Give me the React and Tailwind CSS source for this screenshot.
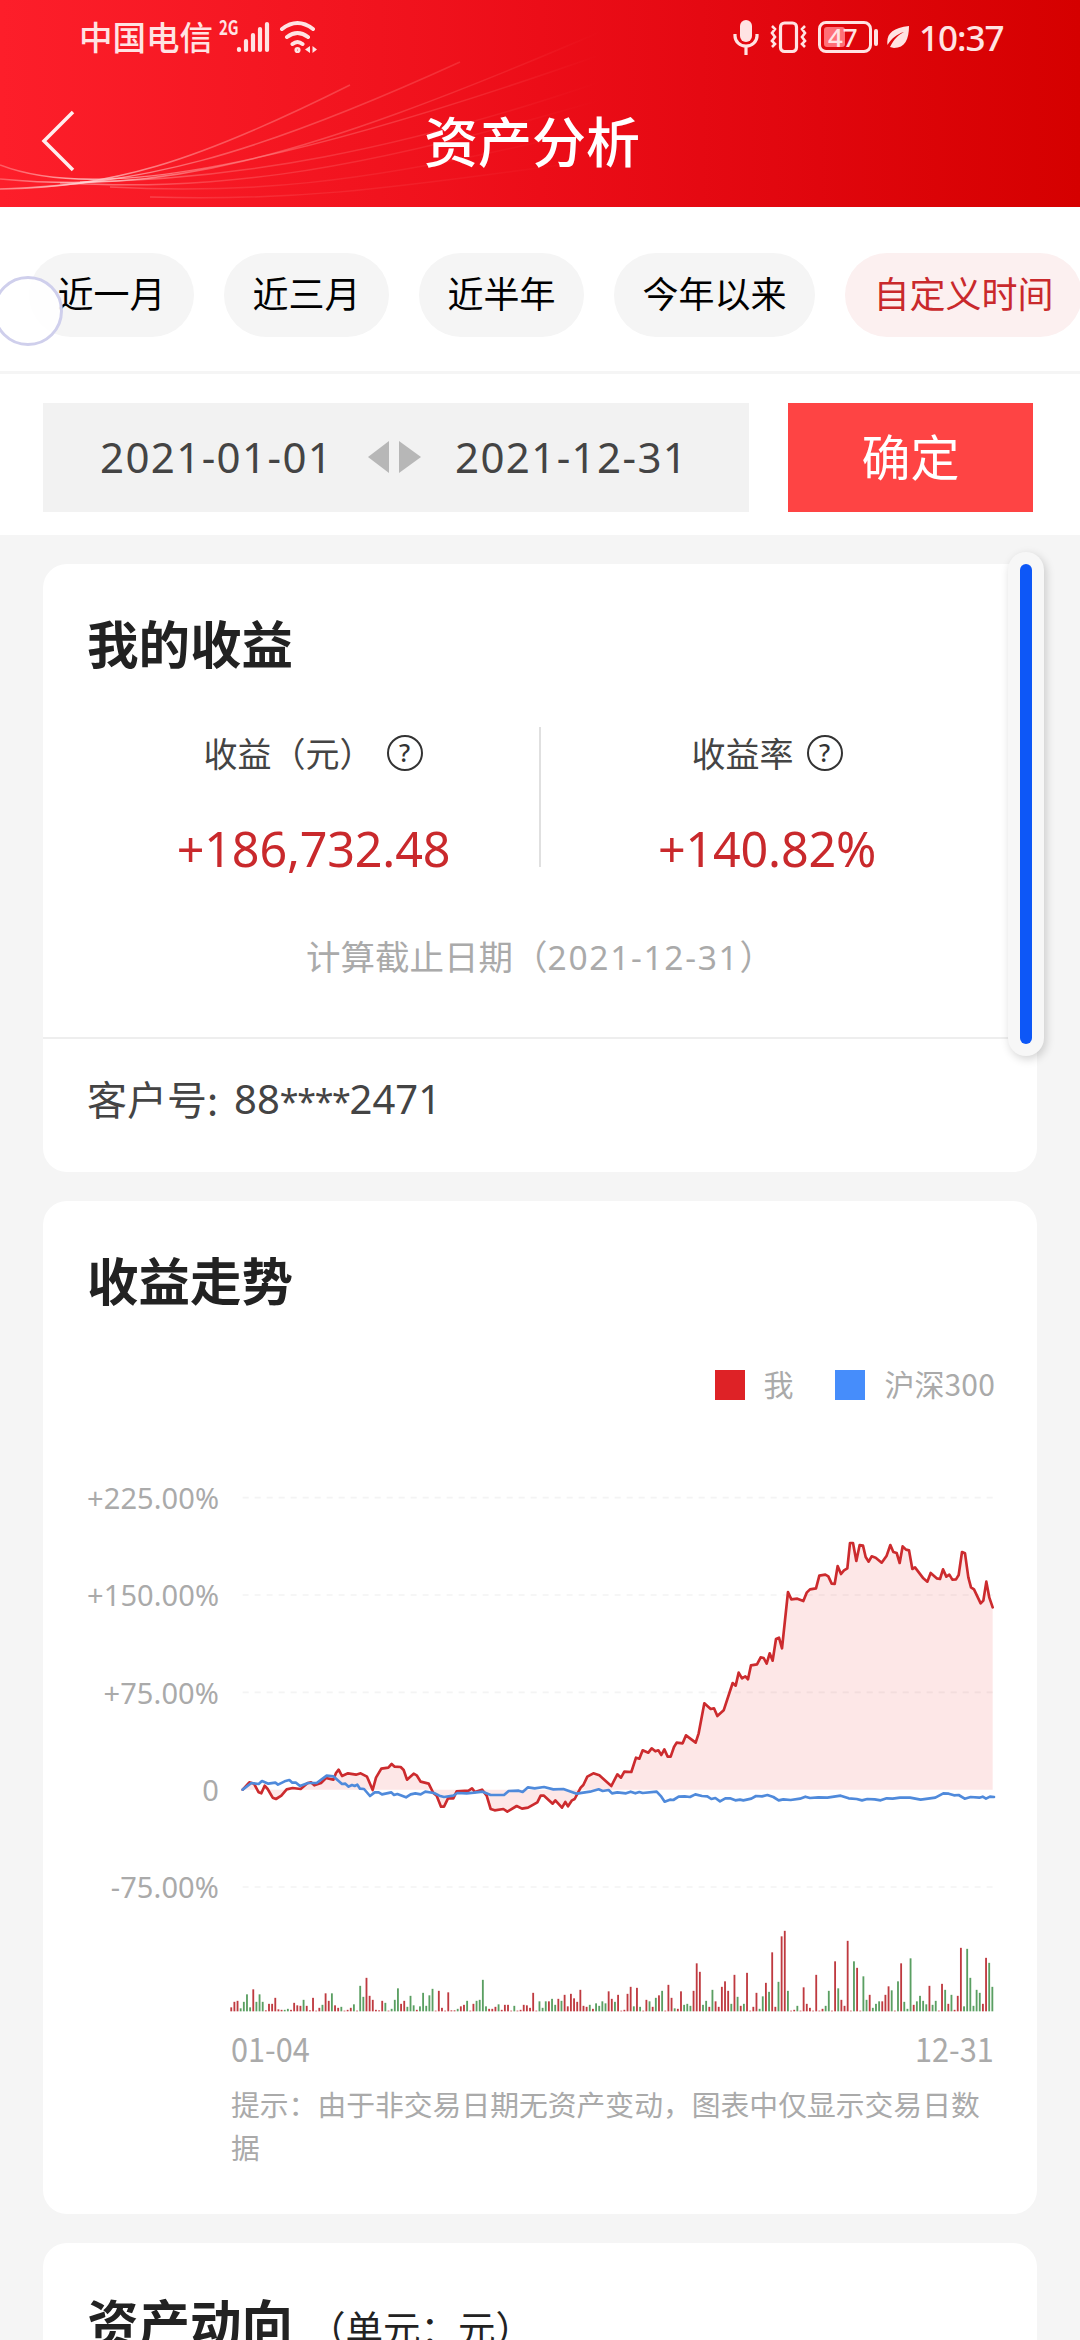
import { useState } from "react";

const periods = ["近一月", "近三月", "近半年", "今年以来", "自定义时间"];

const yLabels = ["+225.00%", "+150.00%", "+75.00%", "0", "-75.00%"];
const gridRows = [-4, 288, 580, 1164];

// cumulative return of the account
const mine =
  "68,872 88,850 102,854 116,880 124,883 134,860 143,870 158,896 168,900 184,890 200,871 218,867 242,870 262,853 273,850 283,859 303,852 318,837 340,842 348,822 356,812 366,831 384,823 408,827 422,823 441,833 458,873 468,836 484,809 505,806 515,795 524,803 542,804 551,813 561,842 581,824 590,829 602,848 626,854 640,882 650,890 663,923 672,923 684,898 700,898 710,877 746,875 756,868 765,879 786,872 800,890 812,930 824,934 850,930 862,938 890,921 906,929 924,926 952,910 962,890 972,890 998,914 1006,904 1026,926 1036,909 1044,922 1056,904 1064,900 1082,866 1090,858 1102,833 1120,823 1138,829 1174,861 1192,826 1203,836 1213,818 1234,819 1248,776 1258,779 1268,754 1285,761 1295,748 1306,757 1315,754 1324,768 1333,751 1343,773 1352,773 1362,744 1370,731 1388,733 1398,709 1427,731 1436,703 1453,613 1472,630 1482,628 1492,651 1511,634 1538,552 1547,560 1556,521 1566,538 1576,532 1584,541 1593,499 1611,496 1622,475 1631,477 1640,494 1649,463 1658,485 1668,420 1677,416 1686,448 1704,279 1714,301 1732,299 1750,306 1760,281 1770,271 1788,268 1798,230 1816,227 1825,232 1835,254 1844,255 1853,201 1863,225 1872,214 1882,208 1890,132 1899,132 1909,186 1919,138 1929,140 1937,174 1946,188 1955,172 1967,176 1985,191 2000,170 2011,138 2020,159 2030,162 2039,192 2048,142 2058,152 2067,154 2077,210 2085,205 2110,238 2122,248 2132,222 2150,238 2160,240 2169,211 2179,233 2188,227 2197,242 2208,241 2216,228 2226,159 2235,163 2245,235 2253,265 2262,271 2282,313 2290,305 2299,248 2308,296 2318,325";

// CSI 300 index
const index300 =
  "68,872 94,852 116,855 126,846 145,854 166,851 174,857 194,847 208,843 217,851 228,851 240,861 264,852 290,852 320,830 340,832 366,855 376,854 386,863 396,858 404,861 412,857 420,869 432,870 450,891 464,880 476,880 486,886 514,880 522,888 532,885 558,895 572,886 586,883 602,886 616,878 642,882 658,890 672,894 700,890 712,882 740,883 762,881 788,878 812,888 852,888 866,876 896,875 908,879 924,865 944,868 972,864 1000,871 1030,870 1070,884 1110,878 1136,871 1148,876 1166,873 1176,883 1192,880 1218,883 1232,878 1246,883 1258,879 1268,882 1310,878 1324,893 1334,908 1350,902 1360,903 1376,893 1394,892 1410,894 1426,886 1446,891 1462,892 1474,900 1486,897 1500,907 1516,898 1530,898 1546,904 1560,902 1570,904 1594,899 1608,891 1626,892 1642,888 1660,894 1676,904 1690,901 1712,903 1740,899 1756,893 1770,897 1795,895 1822,896 1862,890 1886,898 1910,900 1926,904 1942,900 1964,901 1982,904 2000,898 2018,899 2040,896 2070,896 2102,902 2124,899 2146,896 2170,883 2186,884 2202,889 2216,888 2234,899 2252,894 2278,896 2288,893 2298,899 2310,893 2322,894";

// daily change per trading day: positive is drawn red, negative green
const daily = [
  4, 9.5, 10.5, -3, -9.5, -17, -4, 22, -9.5, -17, -9.5, 1, 7.5, 7.5, 13.5, 2, 1.5, -1.5, -2.5, 1.5,
  8.5, 6, 5.5, -11.5, 5.5, 1, 13.5, 0.7, 3.5, -6.5, 18, 10.5, -18, 6, 3.5, -4.5, 0.7, 1.5, 3.5, -7,
  0.7, -25.5, -14.5, 33.5, 15.5, 11.5, 1.5, 1, 10.5, -8.5, 0.7, -2.5, -11.5, -23, 7.5, 10.5, -4.5, -15.5, -6, 1.5,
  -5, -18.5, -5.5, -16, -22.5, 0.7, 20.5, 3.5, 0.7, 19, 1, 1, -2.5, 5, 6.5, -10.5, 0.7, 7.5, -10.5, -11.5,
  -31.5, -5, 2.5, 2.5, 4.5, -7, 1.5, 6.5, 6.5, 0.7, -5.5, 0.7, 1.5, 6.5, 6, 3.5, 18.5, 0.7, -10, -3.5,
  -10, 10, -12.5, -6.5, 12.5, -10.5, 16.5, 5, 17.5, 13, 9.5, 21.5, 5.5, 4.5, -6.5, 2.5, -8, -5.5, -10, -8,
  20, 12.5, -9.5, 16.5, 0.7, 1.5, 17.5, 24.5, -5, 23.5, -4.5, 0.7, 11.5, -10, 4.5, -13.5, 16, -20.5, 0.7, 26.5,
  13.5, -3, 2.5, 20, -6.5, -7.5, -5.5, 20.5, 48, 39.5, -6.5, -10.5, 4.5, -21.5, 10, 4.5, 24.5, 30, 20.5, -7.5,
  36.5, -14.5, 5.5, -7.5, 38.5, 0.7, 4.5, 18.5, -2.5, -15, 28.5, -19.5, 59, 4.5, -29.5, 75, 80.5, -20.5, 0.7, 1.5,
  -5.5, 0.7, 24, 7.5, 3.5, 0.7, 36.5, 0.7, 2.5, -5.5, -20.5, 0.7, 50, -23, 11.5, 5.5, 70.5, 0.7, -50, 43.5,
  0.7, -35, -11.5, 16.5, -3.5, -7.5, -10, 10, 16.5, 25, -21, 0.7, -30, 48, -9.5, -2.5, -53, 6.5, -10, -15.5,
  -10.5, -7, 25.5, -6.5, -10.5, 0.7, 27.5, -21.5, 7.5, -16.5, 1.5, 15.5, 63.5, -5, -62.5, -33.5, -5.5, -21.5, -18.5, 7.5,
  53.5, -48.5, -24.5,
];

function Swoosh() {
  return (
    <svg className="absolute inset-0" width="1080" height="207" fill="none" aria-hidden="true">
      <defs>
        <linearGradient id="fade" gradientUnits="userSpaceOnUse" x1="0" y1="0" x2="600" y2="0">
          <stop offset="0" stopColor="#ffb0b0" stopOpacity="0.4" />
          <stop offset="0.14" stopColor="#ffd5d5" stopOpacity="0.8" />
          <stop offset="0.35" stopColor="#ff9a9a" stopOpacity="0.5" />
          <stop offset="0.75" stopColor="#ff7070" stopOpacity="0.3" />
          <stop offset="1" stopColor="#ff6060" stopOpacity="0" />
        </linearGradient>
      </defs>
      <g stroke="url(#fade)" strokeWidth="1.5">
        <path d="M0 189C110 187 190 165 350 85" />
        <path d="M0 189C140 184 245 160 460 62" />
        <path d="M0 179C160 194 290 165 600 32" />
        <path d="M0 165C80 196 230 185 600 55" />
        <path d="M80 182C240 180 400 150 600 82" opacity="0.7" />
        <path d="M60 183C200 190 330 180 600 100" opacity="0.6" />
        <path d="M110 187C240 194 360 185 560 137" opacity="0.4" />
        <path d="M150 197C290 201 380 190 560 165" opacity="0.4" />
      </g>
    </svg>
  );
}

function StatusBar() {
  return (
    <div className="relative flex h-[74px] items-center pl-[79px] text-[#ffe3e3]">
      <span className="pb-[2px] text-[33.500px] leading-none font-medium">中国电信</span>
      <span className="ml-[6px] mb-[20px] w-[18px] origin-left scale-x-[0.75] text-[20px] leading-none font-bold">2G</span>
      <svg className="-ml-px" width="34" height="34" viewBox="0 0 34 34" stroke="currentColor" strokeWidth="4.2" strokeLinecap="round">
        <path d="M3 30v-1M10 30v-9M17 30V15M24 30V9M31 30V4" />
      </svg>
      <svg className="ml-[9px]" width="40" height="34" viewBox="0 0 40 34" fill="none" stroke="currentColor" strokeWidth="4" strokeLinecap="round">
        <path d="M3 9Q18.500-3 34 9M8 17Q18.500 9 29 17M13.500 24Q18.500 20 23.500 24" />
        <circle cx="18.500" cy="30" r="1.300" strokeWidth="3.600" />
        <path d="M31 26v7l-5-3.500zM33.500 26v7l4.500-3.500z" fill="currentColor" stroke="none" />
      </svg>

      <div className="ml-auto flex items-center pr-[74px]">
        <svg width="26" height="36" viewBox="0 0 26 36" fill="none" stroke="currentColor" strokeWidth="3.2">
          <rect x="7" y="1" width="12" height="22" rx="6" fill="currentColor" stroke="none" />
          <path d="M2 15v2a11 10 0 0 0 22 0v-2M13 27v9" />
        </svg>
        <svg className="ml-[10px]" width="40" height="34" viewBox="0 0 40 34" fill="none" stroke="currentColor" strokeWidth="3.2">
          <rect x="11.500" y="3" width="16" height="28.500" rx="4" />
          <path d="M3 6l3 3-3 4 3 4-3 4 3 3-3 3M36 6l-3 3 3 4-3 4 3 4-3 3 3 3" strokeWidth="2.600" />
        </svg>
        <div className="ml-[9px] flex h-[32px] w-[54px] rounded-[8px] border-[3px] border-current p-[3px]">
          <div className="relative h-full w-[21px] rounded-[3px] bg-[#ff7078]">
            <span className="absolute -top-px left-[4px] font-['Noto_Sans'] text-[26px] leading-[22px] font-medium">47</span>
          </div>
        </div>
        <span className="ml-[2px] h-[17px] w-[4px] rounded-full bg-current" />
        <svg className="ml-[9px]" width="23" height="23" viewBox="0 0 23 23">
          <path d="M22 0C22 13 18 22 7 22L3 21C7 13 11 9 17 6C10 8 5 12 0.500 19C-1 8 5 2 22 0Z" fill="currentColor" />
        </svg>
        <span className="ml-[9px] w-[87px] font-['Noto_Sans'] text-[35px] leading-none font-medium tracking-[-1px] whitespace-nowrap">10:37</span>
      </div>
    </div>
  );
}

function Help() {
  return (
    <span className="flex size-[36px] items-center justify-center rounded-full border-2 border-[#333] font-['Noto_Sans'] text-[25px] leading-none font-medium text-[#333]">
      ?
    </span>
  );
}

function Chart() {
  return (
    <div className="flex">
      <div className="flex w-[132px] flex-col text-right font-['Noto_Sans'] text-[29px] leading-[97.300px] tracking-[0.1px] whitespace-nowrap text-[#aaa]">
        {yLabels.map((label) => (
          <span key={label} className="h-[97.300px]">
            {label}
          </span>
        ))}
      </div>
      {/* drawn at three units per pixel */}
      <svg className="ml-px" width="790" height="570" viewBox="0 -150 2370 1710" fill="none">
        {gridRows.map((y) => (
          <path key={y} d={`M68 ${y}H2320`} stroke="#f4f4f4" strokeWidth="5" strokeDasharray="18 18" />
        ))}
        <polygon points={`68,872 ${mine} 2318,872`} fill="#ea2028" fillOpacity="0.11" />
        <polyline points={mine} stroke="#cc2b2e" strokeWidth="8" strokeLinejoin="round" strokeLinecap="round" />
        <polyline points={index300} stroke="#4f8adb" strokeWidth="8" strokeLinejoin="round" strokeLinecap="round" />
        {daily.map((v, i) => (
          <rect
            key={i}
            x={31 + i * 9.435}
            y={1537 - Math.abs(v) * 3}
            width="5.5"
            height={Math.abs(v) * 3}
            fill={v > 0 ? "#bf3a40" : "#5a9f62"}
          />
        ))}
      </svg>
    </div>
  );
}

export default function App() {
  const [active, setActive] = useState("自定义时间");

  return (
    <div className="relative h-[2340px] w-[1080px] overflow-hidden bg-[#f5f5f5] font-['Noto_Sans_CJK_SC',sans-serif] text-[#444]">
      <header className="relative h-[207px] bg-linear-to-r from-[#fd1e2a] via-[#ec0d18] to-[#d50000]">
        <Swoosh />
        <StatusBar />
        <div className="relative flex h-[133px] items-center">
          <button type="button" className="ml-[40px]" aria-label="返回">
            <svg width="36" height="62" viewBox="0 0 36 62" fill="none" stroke="#ffeded" strokeWidth="3.5">
              <path d="M33 2L4 31l29 29" />
            </svg>
          </button>
          <h1 className="ml-[348px] pb-[2px] text-[54px] leading-none font-medium text-white">资产分析</h1>
        </div>
      </header>

      <nav className="flex h-[167px] items-center gap-[30px] border-b-[3px] border-[#f5f5f5] bg-white pt-[11px] pl-[29px]">
        {periods.map((name) => (
          <button
            key={name}
            type="button"
            onClick={() => setActive(name)}
            className={`h-[84px] shrink-0 rounded-full px-[28.500px] pb-[6px] text-[36px] leading-none ${
              name === active ? "bg-[#fcf0f0] text-[#c9292c]" : "bg-[#f5f5f5] text-black"
            }`}
          >
            {name}
          </button>
        ))}
      </nav>
      <div className="absolute top-[276px] left-[-7px] size-[70px] rounded-full border-[3px] border-[#cfcfec] bg-white/90" />

      <section className="flex h-[161px] justify-between bg-white pt-[29px] pr-[47px] pl-[43px]">
        <div className="flex h-[109px] w-[706px] items-center bg-[#f2f2f2] pb-[2px] pl-[57px] font-['Noto_Sans'] text-[42px] leading-none tracking-[1.4px] whitespace-nowrap text-[#444]">
          <span className="w-[232px]">2021-01-01</span>
          <svg className="mr-[34px] ml-[36px]" width="53" height="32" viewBox="0 0 53 32" fill="#b7b7b7">
            <path d="M21 0v32L0 16zM31 0v32l22-16z" />
          </svg>
          <span>2021-12-31</span>
        </div>
        <button type="button" className="h-[109px] w-[245px] bg-[#fe4444] pb-[7px] text-[49px] leading-none text-white">
          确定
        </button>
      </section>

      <main className="flex flex-col gap-[29px] px-[43px] pt-[29px]">
        <section className="h-[608px] rounded-[24px] bg-white">
          <h2 className="pt-[51px] pl-[44px] text-[51.500px] leading-[54px] font-bold text-[#222]">我的收益</h2>
          <div className="mt-[58px] flex h-[140px]">
            <div className="flex w-[498px] flex-col items-center border-r-2 border-[#e0e0e0] pl-[45px]">
              <div className="flex h-[56px] items-center gap-[13px] pr-px text-[34px]">
                收益（元）
                <Help />
              </div>
              <p className="mt-[46px] font-['Noto_Sans'] text-[48.500px] leading-none tracking-[-0.2px] text-[#c9292c]">+186,732.48</p>
            </div>
            <div className="flex flex-1 flex-col items-center pr-[44px]">
              <div className="flex h-[56px] items-center gap-[13px] text-[34px]">
                收益率
                <Help />
              </div>
              <p className="mt-[46px] font-['Noto_Sans'] text-[48.500px] leading-none tracking-[-0.2px] text-[#c9292c]">+140.82%</p>
            </div>
          </div>
          <p className="mt-[70px] text-center text-[34.500px] leading-[36px] text-[#aaa]">
            计算截止日期（<span className="font-['Noto_Sans'] text-[33.500px] tracking-[1.7px]">2021-12-31</span>）
          </p>
          <div className="mt-[62px] flex h-[128px] items-center border-t-2 border-[#eee] pb-[6px] pl-[44px] text-[40px] leading-none">
            <span className="w-[147px] pb-[3px] whitespace-nowrap">客户号:</span>
            <span className="font-['Noto_Sans']">
              88<span className="text-[34px] tracking-[-1.3px]">****</span>2471
            </span>
          </div>
        </section>

        <section className="h-[1013px] rounded-[24px] bg-white">
          <h2 className="pt-[51px] pl-[44px] text-[51.500px] leading-[54px] font-bold text-[#222]">收益走势</h2>
          <div className="mt-[64px] flex h-[30px] items-center justify-end pr-[42px] text-[30px] leading-none text-[#aaa]">
            <span className="size-[30px] bg-[#de2226]" />
            <span className="ml-[18px] pb-[4px]">我</span>
            <span className="ml-[42px] size-[30px] bg-[#468dfb]" />
            <span className="ml-[19px] pb-[4px]">
              沪深<span className="tracking-[0.2px]">300</span>
            </span>
          </div>
          <div className="mt-[49px] pl-[44px]">
            <Chart />
          </div>
          <div className="mt-[9px] flex h-[40px] items-center justify-between pr-[43px] pl-[188px] text-[33px] leading-none text-[#aaa]">
            <span className="origin-left scale-x-[0.93]">01-04</span>
            <span className="origin-right scale-x-[0.93]">12-31</span>
          </div>
          <p className="mt-[14px] w-[953px] pl-[188px] text-[28.800px] leading-[43px] text-[#aaa]">
            提示：由于非交易日期无资产变动，图表中仅显示交易日数据
          </p>
        </section>

        <section className="h-[300px] rounded-[24px] bg-white">
          <h2 className="flex items-baseline pt-[51px] pl-[44px] text-[51.500px] leading-[54px] font-bold text-[#222]">
            资产动向
            <span className="ml-[15px] text-[37.500px] font-normal">（单元：元）</span>
          </h2>
        </section>
      </main>

      {/* scroll handle floating over the cards */}
      <div className="absolute top-[552px] left-[1008px] h-[504px] w-[36px] rounded-full bg-[#f7f7f7] px-[12px] py-[12px] shadow-[2px_3px_10px_rgba(0,0,0,0.18)]">
        <div className="h-full w-full rounded-full bg-[#0d57f7]" />
      </div>
    </div>
  );
}
